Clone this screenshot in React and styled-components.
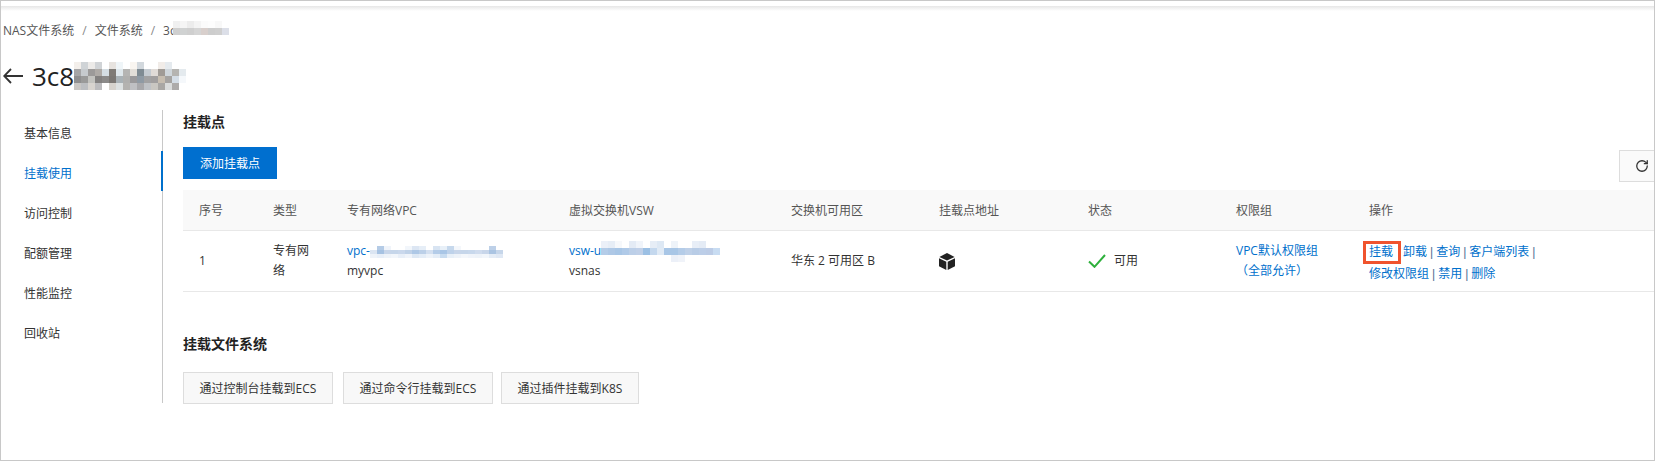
import React from 'react';
import styled, { createGlobalStyle } from 'styled-components';
import { RotateCw } from 'lucide-react';

const GlobalStyle = createGlobalStyle`
  html, body {
    margin: 0;
    padding: 0;
    background: #fff;
  }
  body {
    font-family: "Open Sans", "Noto Sans CJK SC", sans-serif;
    font-size: 12px;
    color: #333;
  }
  * {
    box-sizing: border-box;
  }
`;

const Frame = styled.div`
  width: 1655px;
  height: 461px;
  border: 1px solid #c8c8c8;
  overflow: hidden;
`;

const TopShadow = styled.div`
  height: 5px;
  margin-top: 5px;
  background: linear-gradient(#e6e6e6, #fff);
`;

const Breadcrumb = styled.div`
  display: flex;
  align-items: center;
  height: 20px;
  margin-top: 9px;
  padding-left: 2px;
  color: #555;
`;

const Sep = styled.span`
  margin: 0 8px;
  color: #888;
`;

const TitleRow = styled.div`
  display: flex;
  align-items: center;
  height: 36px;
  margin-top: 18px;
  padding-left: 2px;
  font-size: 26px;
  color: #222;
`;

const BackArrow = styled.svg`
  width: 20px;
  height: 16px;
  margin-right: 9px;
  flex: none;
`;

const Body = styled.div`
  display: flex;
  height: 294px;
  margin-top: 16px;
`;

const Nav = styled.nav`
  width: 162px;
  flex: none;
  height: 293px;
  padding-top: 1px;
  border-right: 1px solid #c8c8c8;
`;

const NavItem = styled.div`
  position: relative;
  display: flex;
  align-items: center;
  height: 40px;
  padding: 4px 0 0 23px;
  color: ${p => (p.$active ? '#0070cc' : '#333')};

  &::after {
    content: '';
    display: ${p => (p.$active ? 'block' : 'none')};
    position: absolute;
    top: 0;
    bottom: 0;
    right: -1px;
    width: 2px;
    background: #0070cc;
  }
`;

const Content = styled.div`
  flex: 1;
  min-width: 0;
  padding-left: 20px;
`;

const SectionTitle = styled.h3`
  margin: ${p => p.$top || 0}px 0 0;
  height: 24px;
  line-height: 24px;
  font-size: 14px;
  font-weight: 600;
  color: #222;
`;

const Toolbar = styled.div`
  display: flex;
  justify-content: space-between;
  align-items: flex-start;
  height: 35px;
  margin-top: 13px;
`;

const PrimaryButton = styled.button`
  width: 94px;
  height: 32px;
  padding: 0;
  border: none;
  background: #006fcf;
  color: #fff;
  font: inherit;
`;

const RefreshButton = styled.button`
  display: flex;
  align-items: center;
  justify-content: center;
  width: 35px;
  height: 32px;
  margin-top: 3px;
  padding: 0 0 0 10px;
  border: 1px solid #ddd;
  border-right: none;
  background: #fafafa;
  color: #333;
`;

const columns = '74px 74px 222px 222px 148px 149px 148px 133px 1fr';

const HeadRow = styled.div`
  display: grid;
  grid-template-columns: ${columns};
  height: 41px;
  margin-top: 8px;
  padding-top: 1px;
  background: #f9f9f9;
  border-bottom: 1px solid #e8e8e8;
  color: #555;
`;

const DataRow = styled.div`
  display: grid;
  grid-template-columns: ${columns};
  height: 61px;
  border-bottom: 1px solid #e8e8e8;
`;

const Cell = styled.div`
  display: flex;
  flex-direction: column;
  justify-content: center;
  padding: 0 16px;
  line-height: 20px;
`;

const InlineCell = styled(Cell)`
  flex-direction: row;
  justify-content: flex-start;
  align-items: center;
`;

const LinkLine = styled.div`
  display: flex;
  align-items: flex-start;
  height: 20px;
  color: #0070cc;
`;

const Mosaic = styled.svg`
  display: block;
  flex: none;
  margin-top: ${p => p.$top || 0}px;
  margin-bottom: ${p => p.$bottom || 0}px;
  margin-left: ${p => p.$left || 0}px;
`;

const Link = styled.span`
  color: #0070cc;
`;

const OpsText = styled.div`
  margin-top: 3px;
  color: #0070cc;
  line-height: 21px;
  white-space: nowrap;
`;

const Bar = styled.span`
  margin: 0 3px;
  font-family: "Liberation Sans", sans-serif;
  color: #4f6f92;
`;

const Highlight = styled.span`
  position: relative;
  margin-right: 10px;

  &::after {
    content: '';
    position: absolute;
    top: -2px;
    bottom: -4px;
    left: -6px;
    right: -8px;
    border: 3px solid #f0532d;
  }
`;

const StatusIcon = styled.svg`
  width: 18px;
  height: 14px;
  margin-right: 8px;
  flex: none;
`;

const ButtonRow = styled.div`
  display: flex;
  margin-top: 16px;
`;

const GhostButton = styled.button`
  height: 32px;
  width: ${p => p.$w}px;
  margin-right: ${p => p.$gap || 0}px;
  padding: 0;
  border: 1px solid #ddd;
  background: #f8f8f8;
  color: #333;
  font: inherit;
`;

const titleBlur = [
  ['f3efeb', 'cfd3d6', 'eceae8', 'd0d3d6', 'ffffff', 'e7e3df', 'eff5f8', 'ffffff', 'f9f5f0', 'd2d8dd', 'ffffff', 'ffffff', 'f1ece8', 'e5eaee', 'ffffff', 'ffffff'],
  ['a5a5a6', 'c6cacd', '9c9a99', 'aeaaa6', 'd4dde3', '7f7b76', 'dfe8ec', 'b5b5b3', 'e2ded8', '7f8b93', 'c5cbd1', 'e0dbd7', 'a09b96', 'cfd6db', 'b5b4b1', 'e4eaee'],
  ['8f8f90', '9a9a99', 'c3c3bf', '838180', '8b8a89', '7b7874', 'a9b2b6', 'b0b0ae', '9a999b', '8f9aa4', 'a2a2a3', 'a19f9f', 'c6bdb0', 'a5a3a1', 'd4dde6', 'f5f8fb'],
  ['c8c6c4', 'bcbec1', 'd8d4cf', 'bcbcbe', 'ffffff', 'd6d3cd', 'dde2e2', 'b4b3b0', 'bfc0c3', 'a8a8ab', 'bfc2c6', 'c9c7c2', 'a9a7a4', 'dadcdc', 'adabaa', 'ffffff'],
];

const crumbBlur = [
  ['f0f0f0', 'f5f5f5', 'ececec', 'f4f4f4', 'fbfbfb', 'fdfdfd', 'f8f8f8', 'ffffff'],
  ['cfcfcf', 'd0d2d2', 'cfcfcf', 'd5d5d5', 'd8cfcc', 'cdcdcd', 'cfcfcf', 'dcdfe8'],
];

const vpcBlur = [
  ['ffffff', 'b4cbe6', 'f0f4fa', 'ffffff', 'ffffff', 'f2f6fb', 'dce6f3', 'e6eef7', 'ffffff', 'd8e4f2', 'e8f0f8', 'c6d8ec', 'f4f7fb', 'ffffff', 'ffffff', 'ffffff', 'ffffff', 'bdd0e8', 'ffffff'],
  ['dbe5f2', 'a6c2e2', 'c8d6ea', 'c6d6ea', 'cad8ec', 'c0d2e8', 'aec8e6', 'bcd0e8', 'd4e0f0', 'b4cce8', 'a9c6e6', 'bed2ea', 'c8d6ea', 'c6d6ea', 'c8d8ec', 'd0dcee', 'c8d6ea', 'aac4e2', 'c6d6ea'],
  ['eef3f9', 'e8eff8', 'eef3f9', 'f2f6fb', 'e8eff8', 'f0f4fa', 'dde8f4', 'e4edf7', 'eef3f9', 'e4edf7', 'c8dcf0', 'e8f0f8', 'eef3f9', 'f4f7fb', 'f0f4fa', 'eef3f9', 'f2f6fb', 'e4ecf6', 'dfe8f4'],
];

const vswBlur = [
  ['ebf0f8', 'e6edf6', 'f6f8fb', 'ffffff', 'e4ebf5', 'f0f4fa', 'ffffff', 'e6edf6', 'dde8f4', 'ffffff', 'eef3f9', 'ffffff', 'ffffff', 'e8eef7', 'e4ebf5', 'ffffff', 'ffffff'],
  ['b4cce8', 'aec8e6', 'a8c6e6', 'b0cae8', 'bccfe8', 'c0d0e8', '9cc0e4', 'c4d8ee', 'e0eaf5', 'a8c6e6', 'a8c6e6', 'b4cce8', 'bed0e8', 'b8cce6', 'bccee8', 'bccce6', 'c8dcf2'],
  ['ffffff', 'ffffff', 'ffffff', 'ffffff', 'ffffff', 'ffffff', 'ffffff', 'ffffff', 'ffffff', 'ffffff', 'ecf0f8', 'f0f3f9', 'ffffff', 'ffffff', 'ffffff', 'ffffff', 'ffffff'],
];

const BlurBlock = ({ rows, cellH = 7, top, bottom, left }) => {
  const width = rows[0].length * 7;
  const height = rows.length * cellH;
  return (
    <Mosaic width={width} height={height} shapeRendering="crispEdges" $top={top} $bottom={bottom} $left={left}>
      {rows.map((row, y) =>
        row.map((color, x) => (
          <rect key={`${x}-${y}`} x={x * 7} y={y * cellH} width="7" height={cellH} fill={`#${color}`} />
        ))
      )}
    </Mosaic>
  );
};

const navItems = ['基本信息', '挂载使用', '访问控制', '配额管理', '性能监控', '回收站'];
const headers = ['序号', '类型', '专有网络VPC', '虚拟交换机VSW', '交换机可用区', '挂载点地址', '状态', '权限组', '操作'];

const App = () => (
  <Frame>
    <GlobalStyle />
    <TopShadow />
    <Breadcrumb>
      NAS文件系统<Sep>/</Sep>文件系统<Sep>/</Sep>3c
      <BlurBlock rows={crumbBlur} bottom={4} left={-3} />
    </Breadcrumb>
    <TitleRow>
      <BackArrow viewBox="0 0 20 16">
        <path d="M8 1 1.2 8 8 15M1.2 8H20" fill="none" stroke="#333" strokeWidth="1.8" />
      </BackArrow>
      3c8
      <BlurBlock rows={titleBlur} />
    </TitleRow>
    <Body>
      <Nav>
        {navItems.map((item, i) => (
          <NavItem key={item} $active={i === 1}>{item}</NavItem>
        ))}
      </Nav>
      <Content>
        <SectionTitle>挂载点</SectionTitle>
        <Toolbar>
          <PrimaryButton>添加挂载点</PrimaryButton>
          <RefreshButton>
            <RotateCw size={14} strokeWidth={2.2} />
          </RefreshButton>
        </Toolbar>
        <HeadRow>
          {headers.map(h => (
            <Cell key={h}>{h}</Cell>
          ))}
        </HeadRow>
        <DataRow>
          <Cell>1</Cell>
          <Cell>专有网络</Cell>
          <Cell>
            <LinkLine>
              vpc-
              <BlurBlock rows={vpcBlur} cellH={4} top={5} />
            </LinkLine>
            <div>myvpc</div>
          </Cell>
          <Cell>
            <LinkLine>
              vsw-u
              <BlurBlock rows={vswBlur} />
            </LinkLine>
            <div>vsnas</div>
          </Cell>
          <Cell>华东 2 可用区 B</Cell>
          <InlineCell>
            <svg width="16" height="17" viewBox="0 0 16 17">
              <path d="M8 0 15.6 3.9 8 7.6.4 3.9z" fill="#222" />
              <path d="M0 5.2 7.3 8.8V17L0 13.2z" fill="#222" />
              <path d="M16 5.2 8.7 8.8V17L16 13.2z" fill="#222" />
            </svg>
          </InlineCell>
          <InlineCell>
            <StatusIcon viewBox="0 0 18 14">
              <path d="M1 7.5 6.5 12.8 17 1" fill="none" stroke="#2eb03c" strokeWidth="2" />
            </StatusIcon>
            可用
          </InlineCell>
          <Cell>
            <Link>VPC默认权限组</Link>
            <Link>（全部允许）</Link>
          </Cell>
          <Cell>
            <OpsText>
              <Highlight>挂载</Highlight>卸载<Bar>|</Bar>查询<Bar>|</Bar>客户端列表<Bar>|</Bar>
              <br />
              修改权限组<Bar>|</Bar>禁用<Bar>|</Bar>删除
            </OpsText>
          </Cell>
        </DataRow>
        <SectionTitle $top={40}>挂载文件系统</SectionTitle>
        <ButtonRow>
          <GhostButton $w={150} $gap={10}>通过控制台挂载到ECS</GhostButton>
          <GhostButton $w={150} $gap={8}>通过命令行挂载到ECS</GhostButton>
          <GhostButton $w={138}>通过插件挂载到K8S</GhostButton>
        </ButtonRow>
      </Content>
    </Body>
  </Frame>
);

export default App;
